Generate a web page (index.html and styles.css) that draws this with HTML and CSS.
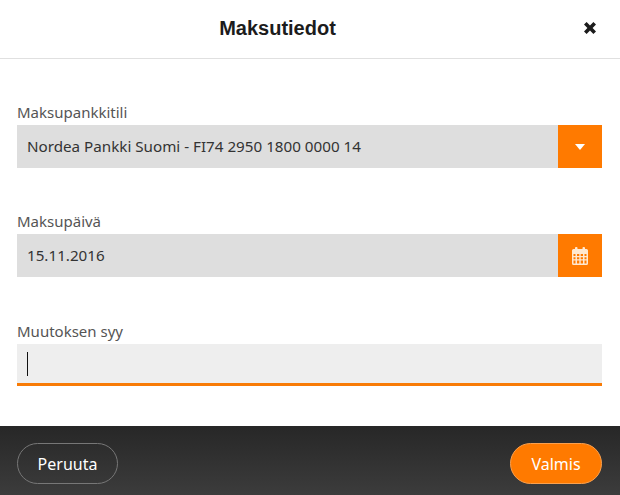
FILE: index.html
```html
<!DOCTYPE html>
<html lang="fi">
<head>
    <meta charset="UTF-8">
    <meta name="viewport" content="width=device-width, initial-scale=1.0">
    <title>Maksutiedot</title>
    <link rel="stylesheet" href="styles.css">
</head>
<body>

    <div class="dialog">
        <div class="dialog-header">
            <h2>Maksutiedot</h2>
            <svg class="close-icon" viewBox="0 0 14 14" width="14" height="14">
                <path d="M1 3.6 3.6 1 7 4.4 10.4 1 13 3.6 9.6 7 13 10.4 10.4 13 7 9.6 3.6 13 1 10.4 4.4 7z" fill="#1c1c1c"/>
            </svg>
        </div>

        <div class="dialog-body">
            <div class="field">
                <label>Maksupankkitili</label>
                <div class="control">
                    <div class="control-value">Nordea Pankki Suomi - FI74 2950 1800 0000 14</div>
                    <div class="control-button">
                        <svg viewBox="0 0 10 6" width="10" height="6">
                            <path d="M0 0h10L5 6z" fill="#fff"/>
                        </svg>
                    </div>
                </div>
            </div>

            <div class="field">
                <label>Maksupäivä</label>
                <div class="control">
                    <div class="control-value">15.11.2016</div>
                    <div class="control-button">
                        <svg viewBox="0 0 16 18" width="16" height="18">
                            <path fill="#ffe8d0" fill-rule="evenodd" d="M1.500 2H3V1a1 1 0 0 1 1-1h.5a1 1 0 0 1 1 1v1h5V1a1 1 0 0 1 1-1h.5a1 1 0 0 1 1 1v1h1.500A1.500 1.500 0 0 1 16 3.500V16.500A1.500 1.500 0 0 1 14.500 18H1.500A1.500 1.500 0 0 1 0 16.500V3.500A1.500 1.500 0 0 1 1.500 2zM1.500 7v2h2V7zM5 7v2h2.300V7zM8.700 7v2H11V7zM12.500 7v2h2V7zM1.500 10.300v2h2v-2zM5 10.300v2h2.300v-2zM8.700 10.300v2H11v-2zM12.500 10.300v2h2v-2zM1.500 13.600v3h2v-3zM5 13.600v3h2.300v-3zM8.700 13.600v3H11v-3zM12.500 13.600v3h2v-3z"/>
                        </svg>
                    </div>
                </div>
            </div>

            <div class="field field-reason">
                <label>Muutoksen syy</label>
                <div class="text-input"><span class="caret"></span></div>
            </div>
        </div>

        <div class="dialog-footer">
            <button class="btn btn-cancel">Peruuta</button>
            <button class="btn btn-done">Valmis</button>
        </div>
    </div>

</body>
</html>
```

FILE: styles.css
```css
body {
    margin: 0;
    font-family: 'Noto Sans', sans-serif;
    background-color: #fff;
}

.dialog {
    width: 620px;
    height: 495px;
    display: flex;
    flex-direction: column;
}

.dialog-header {
    height: 56px;
    padding: 0 65px 2px 0;
    border-bottom: 1px solid #e0e0e0;
    display: flex;
    justify-content: center;
    align-items: center;
    position: relative;
}

.dialog-header h2 {
    margin: 0;
    font-family: 'Liberation Sans', sans-serif;
    font-size: 20px;
    font-weight: bold;
    color: #1c1c1c;
}

.close-icon {
    position: absolute;
    right: 23px;
    top: 21px;
}

.dialog-body {
    flex: 1;
    padding: 44px 18px 0 17px;
    display: flex;
    flex-direction: column;
    gap: 44px;
}

.field label {
    display: block;
    height: 22px;
    line-height: 18px;
    font-size: 15px;
    color: #555;
}

.field-reason {
    margin-top: 1px;
}

.control {
    height: 43px;
    display: flex;
    background-color: #dedede;
}

.control-value {
    flex: 1;
    padding-left: 10px;
    line-height: 43px;
    font-size: 15.200px;
    color: #333;
}

.control-button {
    width: 44px;
    background-color: #ff7a00;
    display: flex;
    justify-content: center;
    align-items: center;
}

.text-input {
    height: 39px;
    background-color: #eee;
    border-bottom: 3px solid #f87b06;
    display: flex;
    align-items: center;
    padding-left: 10px;
}

.caret {
    width: 1px;
    height: 24px;
    background-color: #111;
}

.dialog-footer {
    height: 69px;
    padding: 17px 18px 11px 17px;
    box-sizing: border-box;
    background: linear-gradient(to bottom, #272727, #3c3c3c);
    display: flex;
    justify-content: space-between;
    align-items: flex-start;
}

.btn {
    height: 41px;
    border-radius: 21px;
    font-family: 'Noto Sans', sans-serif;
    font-size: 16px;
    color: #fff;
    padding: 0;
}

.btn-cancel {
    width: 101px;
    background-color: transparent;
    border: 1.500px solid #777;
}

.btn-done {
    width: 92px;
    background-color: #ff7a00;
    border: 1px solid #f9a04f;
}
```
